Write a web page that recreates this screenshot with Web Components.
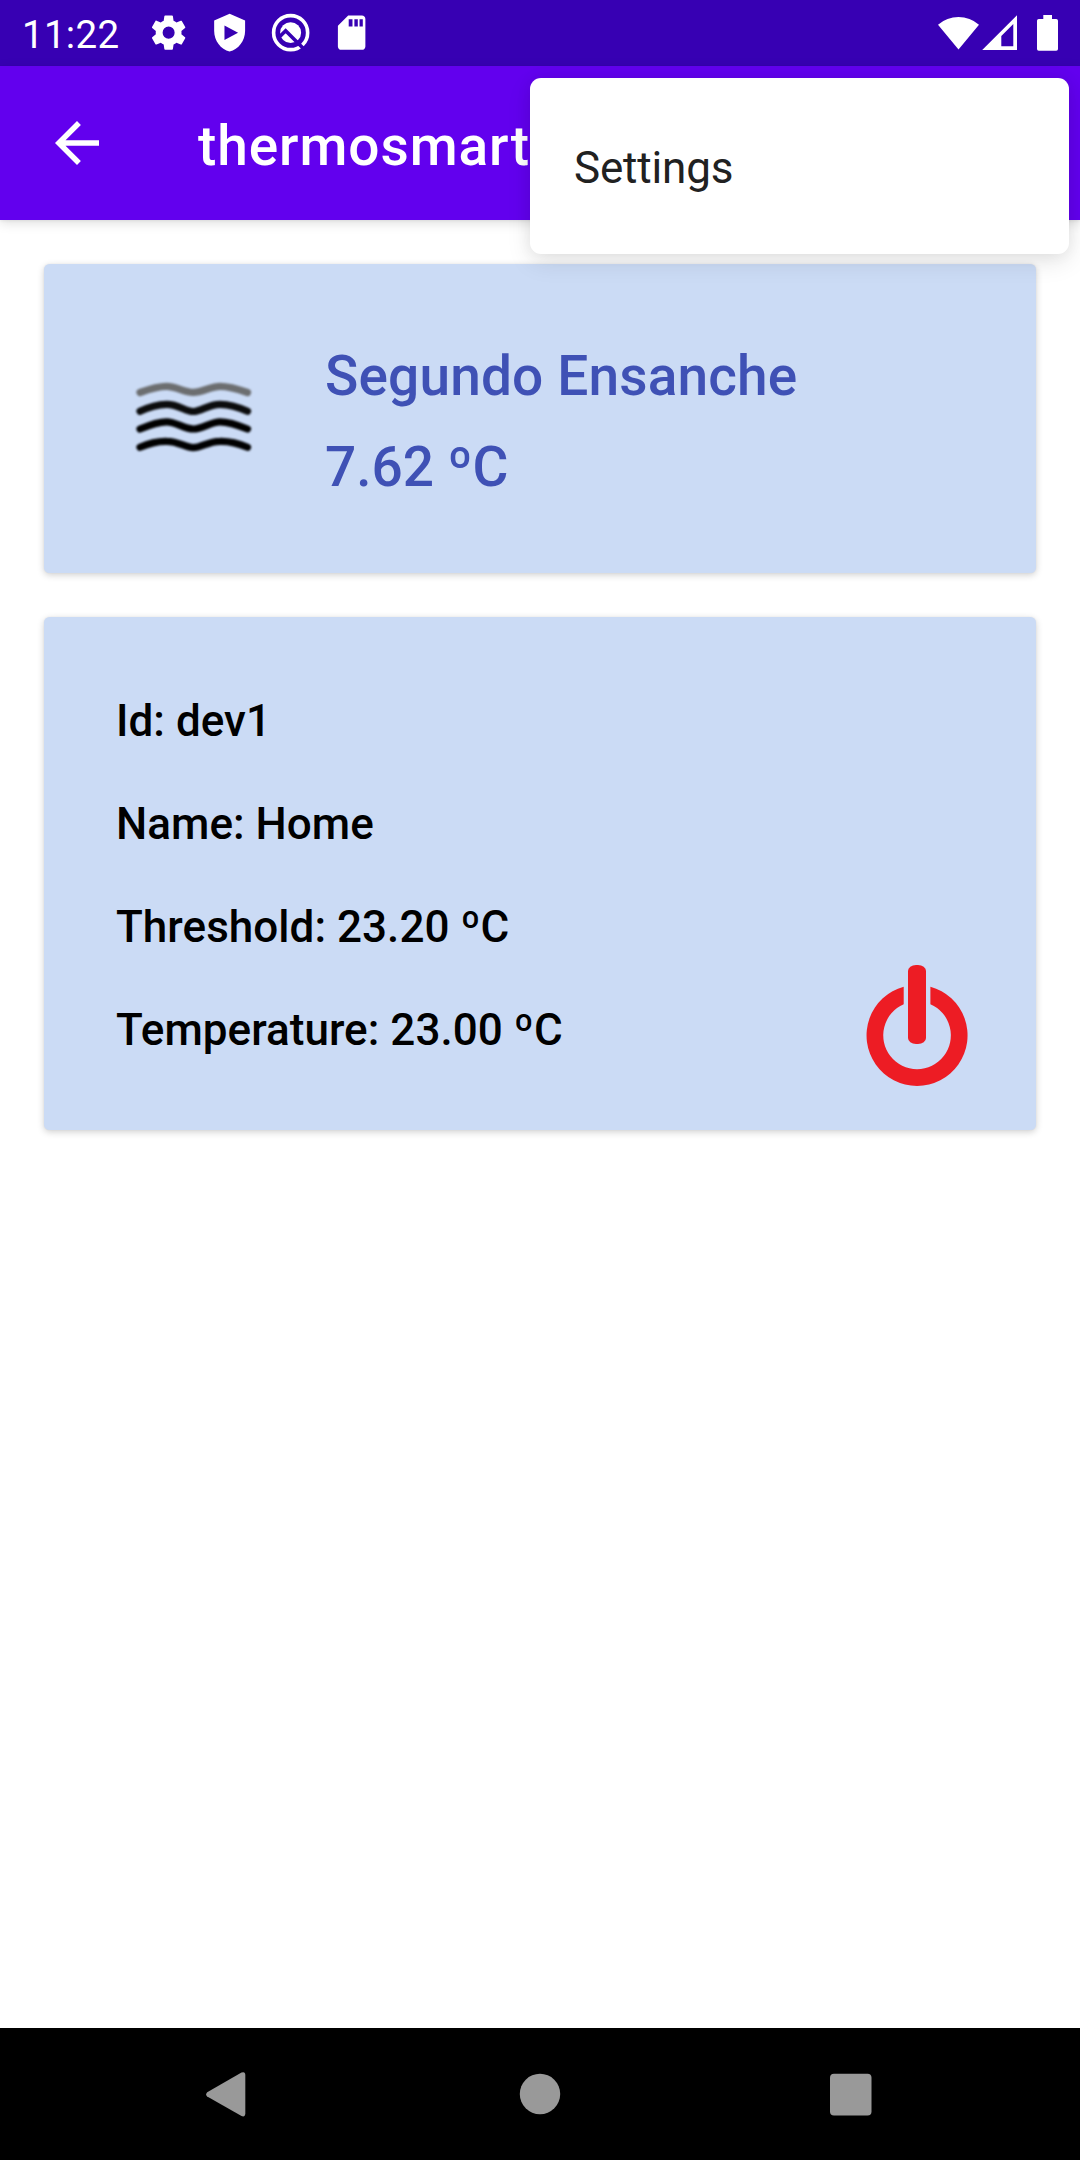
<!DOCTYPE html>
<html lang="en">
<head>
<meta charset="utf-8">
<title>thermosmart</title>
<style>
html,body{margin:0;height:100%;background:#fff}
body{font-family:Roboto,"Liberation Sans",sans-serif;overflow:hidden}
</style>
</head>
<body>
<thermo-app></thermo-app>
<script>
const define = (name, html) => {
  const template = document.createElement('template');
  template.innerHTML = html;
  customElements.define(name, class extends HTMLElement {
    constructor() {
      super();
      this.attachShadow({mode: 'open'}).append(template.content.cloneNode(true));
    }
  });
};

define('status-bar', `
<style>
:host{display:flex;box-sizing:border-box;height:66px;padding:0 22px;background:#3700b3;color:#fff;justify-content:space-between;align-items:center}
div{display:flex;align-items:center}
.time{font-size:38.5px;line-height:44px;width:125.8px;padding-top:4px;box-sizing:border-box;white-space:nowrap;letter-spacing:.3px}
.left{gap:19.75px}.left .time{margin-right:-19.75px}
svg{display:block;fill:currentColor}
.left svg{width:41.25px;height:41.25px}
.right svg{width:120px;height:36px}
</style>
<div class="left">
  <span class="time">11:22</span>
  <svg viewBox="0 0 24 24"><path fill-rule="evenodd" d="M19.43 12.98c.04-.32.07-.64.07-.98s-.03-.66-.07-.98l2.11-1.65c.19-.15.24-.42.12-.64l-2-3.46c-.12-.22-.39-.3-.61-.22l-2.49 1c-.52-.4-1.08-.73-1.69-.98l-.38-2.65C14.46 2.18 14.25 2 14 2h-4c-.25 0-.46.18-.49.42l-.38 2.65c-.61.25-1.17.59-1.69.98l-2.49-1c-.23-.09-.49 0-.61.22l-2 3.46c-.13.22-.07.49.12.64l2.11 1.65c-.04.32-.07.65-.07.98s.03.66.07.98l-2.11 1.65c-.19.15-.24.42-.12.64l2 3.46c.12.22.39.3.61.22l2.49-1c.52.4 1.08.73 1.69.98l.38 2.65c.03.24.24.42.49.42h4c.25 0 .46-.18.49-.42l.38-2.65c.61-.25 1.17-.59 1.69-.98l2.49 1c.23.09.49 0 .61-.22l2-3.46c.12-.22.07-.49-.12-.64l-2.11-1.65zM12 15.5a3.5 3.5 0 1 1 0-7 3.5 3.5 0 0 1 0 7z"/></svg>
  <svg viewBox="0 0 24 24"><path fill-rule="evenodd" d="M12 1 3 4.900V11c0 5.600 3.800 10.700 9 12 5.200-1.300 9-6.400 9-12V4.900zM9 7.900v8.400L16.900 12z"/></svg>
  <svg viewBox="0 0 24 24"><circle cx="12" cy="12" r="9.900" fill="none" stroke="currentColor" stroke-width="2.100"/><circle cx="12" cy="12" r="6.100"/><path fill="none" stroke="#3700b3" stroke-width="2.100" d="M5 15 9.100 10.900 20.600 22.400"/></svg>
  <svg viewBox="0 0 24 24"><path fill-rule="evenodd" d="M18 2h-8L4.020 8 4 20c0 1.100.9 2 2 2h12c1.100 0 2-.9 2-2V4c0-1.100-.9-2-2-2zM10.300 4.200v4.300h2.200V4.200zm3.300 0v4.300h2V4.200zm3 0v4.300h1.900V4.200z"/></svg>
</div>
<div class="right">
  <svg viewBox="938 15 120 36"><path d="M938 24.700a31.500 31.500 0 0 1 41 0L958.500 49.500zM1017 15.300V50H982.200zM1013.300 24 1001.300 36v10.300h12zM1043.300 15h8.700v4h4.200a1.800 1.800 0 0 1 1.800 1.800v28.100a1.800 1.800 0 0 1-1.800 1.800h-17.400a1.800 1.800 0 0 1-1.800-1.800V20.800a1.800 1.800 0 0 1 1.800-1.800h4.500z" fill-rule="evenodd"/></svg>
</div>`);

define('app-bar', `
<style>
:host{display:flex;box-sizing:border-box;height:154px;padding-left:44px;align-items:center;background:#6200ee;color:#fff;position:relative;box-shadow:0 3px 11px rgba(0,0,0,.13),0 1px 3px rgba(0,0,0,.06)}
svg{width:66px;height:66px;fill:currentColor}
h1{margin:0 0 0 88px;font-size:55px;line-height:64px;font-weight:500;letter-spacing:.92px;padding-top:6.500px;white-space:nowrap}
</style>
<svg viewBox="0 0 24 24"><path d="M20 11H7.830l5.590-5.590L12 4l-8 8 8 8 1.410-1.410L7.830 13H20z"/></svg>
<h1><slot></slot></h1>`);

define('popup-menu', `
<style>
:host{position:absolute;z-index:5;top:78px;right:11px;width:539px;height:176px;box-sizing:border-box;padding:0 44px;display:flex;align-items:center;background:#fff;border-radius:11px;color:#212121;font-size:44px;line-height:52px;letter-spacing:-.17px;box-shadow:0 8px 24px rgba(0,0,0,.1),0 0 16px rgba(0,0,0,.06)}
div{padding-top:4px}
</style>
<div><slot></slot></div>`);

define('info-card', `
<style>
:host{display:flex;box-sizing:border-box;background:#cbdbf5;border-radius:5.500px;box-shadow:0 2px 7px rgba(0,0,0,.19),0 0 2px rgba(0,0,0,.06)}
</style><slot></slot>`);

define('fog-icon', `
<style>:host{display:block;width:116px;height:76px}svg{display:block;filter:blur(1.1px);overflow:visible}</style>
<svg width="116" height="76" viewBox="136 380 116 76" fill="none" stroke="#000" stroke-width="7.200" stroke-linecap="round" stroke-linejoin="round">
<path stroke="#6c6e70" d="M140 392.500Q157 386.300 166.700 386.300C176 386.300 184 392.300 193.300 392.300S211 386.300 220 386.300Q230 386.300 247.500 392.500"/>
<path stroke="#0b0c0d" d="M140 411.300Q154 404.500 166.700 404.300C179 404.300 185 411.500 193.300 411.500S208 404.300 220 404.300Q233 404.500 247.500 411.300"/>
<path d="M140 429Q157 421.800 166.700 421.800C176 421.800 184 429 193.300 429S211 421.800 220 421.800Q230 421.800 247.500 429"/>
<path d="M140 447.300Q154 441 166.700 441.300C179 441.300 185 447.700 193.300 447.700S208 441.300 220 441.300Q233 441 247.500 447.300"/>
</svg>`);

define('power-button', `
<style>:host{display:block;width:102px;height:122px}svg{display:block}</style>
<svg width="102" height="122" viewBox="866 964 102 122" fill="#ed1c24">
<path d="M903.700 986.700A50.500 50.500 0 1 0 930.400 986.700V1004.300A33.800 33.800 0 1 1 903.700 1004.300z"/>
<rect x="908" y="965" width="18" height="79" rx="8" ry="6"/>
</svg>`);

define('weather-card', `
<style>
:host{display:block}
info-card{height:309px;padding-left:92px}
fog-icon{margin-top:116px}
.text{margin:66.500px 0 0 73px;display:flex;flex-direction:column;font-size:55px;line-height:91px;font-weight:500;color:#3f51b5;letter-spacing:.15px;white-space:nowrap}
slot[name=temp]{display:block;letter-spacing:-.05px}
</style>
<info-card><fog-icon></fog-icon><div class="text"><slot name="place"></slot><slot name="temp"></slot></div></info-card>`);

define('device-card', `
<style>
:host{display:block}
info-card{height:513px;padding:0 68px 44px 72px;justify-content:space-between;align-items:flex-end}
.rows{align-self:flex-start;margin-top:52.500px;display:flex;flex-direction:column;font-size:44px;line-height:103px;font-weight:500;color:#000;letter-spacing:.04px;white-space:nowrap}
</style>
<info-card><div class="rows"><slot></slot></div><power-button></power-button></info-card>`);

define('nav-bar', `
<style>
:host{display:flex;justify-content:center;align-items:center;height:132px;background:#000}
svg{display:block;width:668px;height:46px;fill:#999}
</style>
<svg viewBox="206 2071 668 46"><path d="M207.200 2092.200 241.500 2072.600Q245.200 2071 245.300 2075V2113.500Q245 2117.500 241.500 2116L207.200 2096.500Q205 2094.500 207.200 2092.200z"/><circle cx="540" cy="2094" r="20.200"/><rect x="830" y="2073.800" width="41.500" height="41.700" rx="4"/></svg>`);

define('thermo-app', `
<style>
:host{display:flex;flex-direction:column;width:1080px;height:2160px;background:#fff;position:relative}
main{flex:1;display:flex;flex-direction:column;gap:44px;padding:44px}
</style>
<status-bar></status-bar>
<app-bar>thermosmart</app-bar>
<popup-menu>Settings</popup-menu>
<main>
  <weather-card><span slot="place">Segundo Ensanche</span><span slot="temp">7.62 ºC</span></weather-card>
  <device-card><div>Id: dev1</div><div>Name: Home</div><div>Threshold: 23.20 ºC</div><div>Temperature: 23.00 ºC</div></device-card>
</main>
<nav-bar></nav-bar>`);
</script>
</body>
</html>
